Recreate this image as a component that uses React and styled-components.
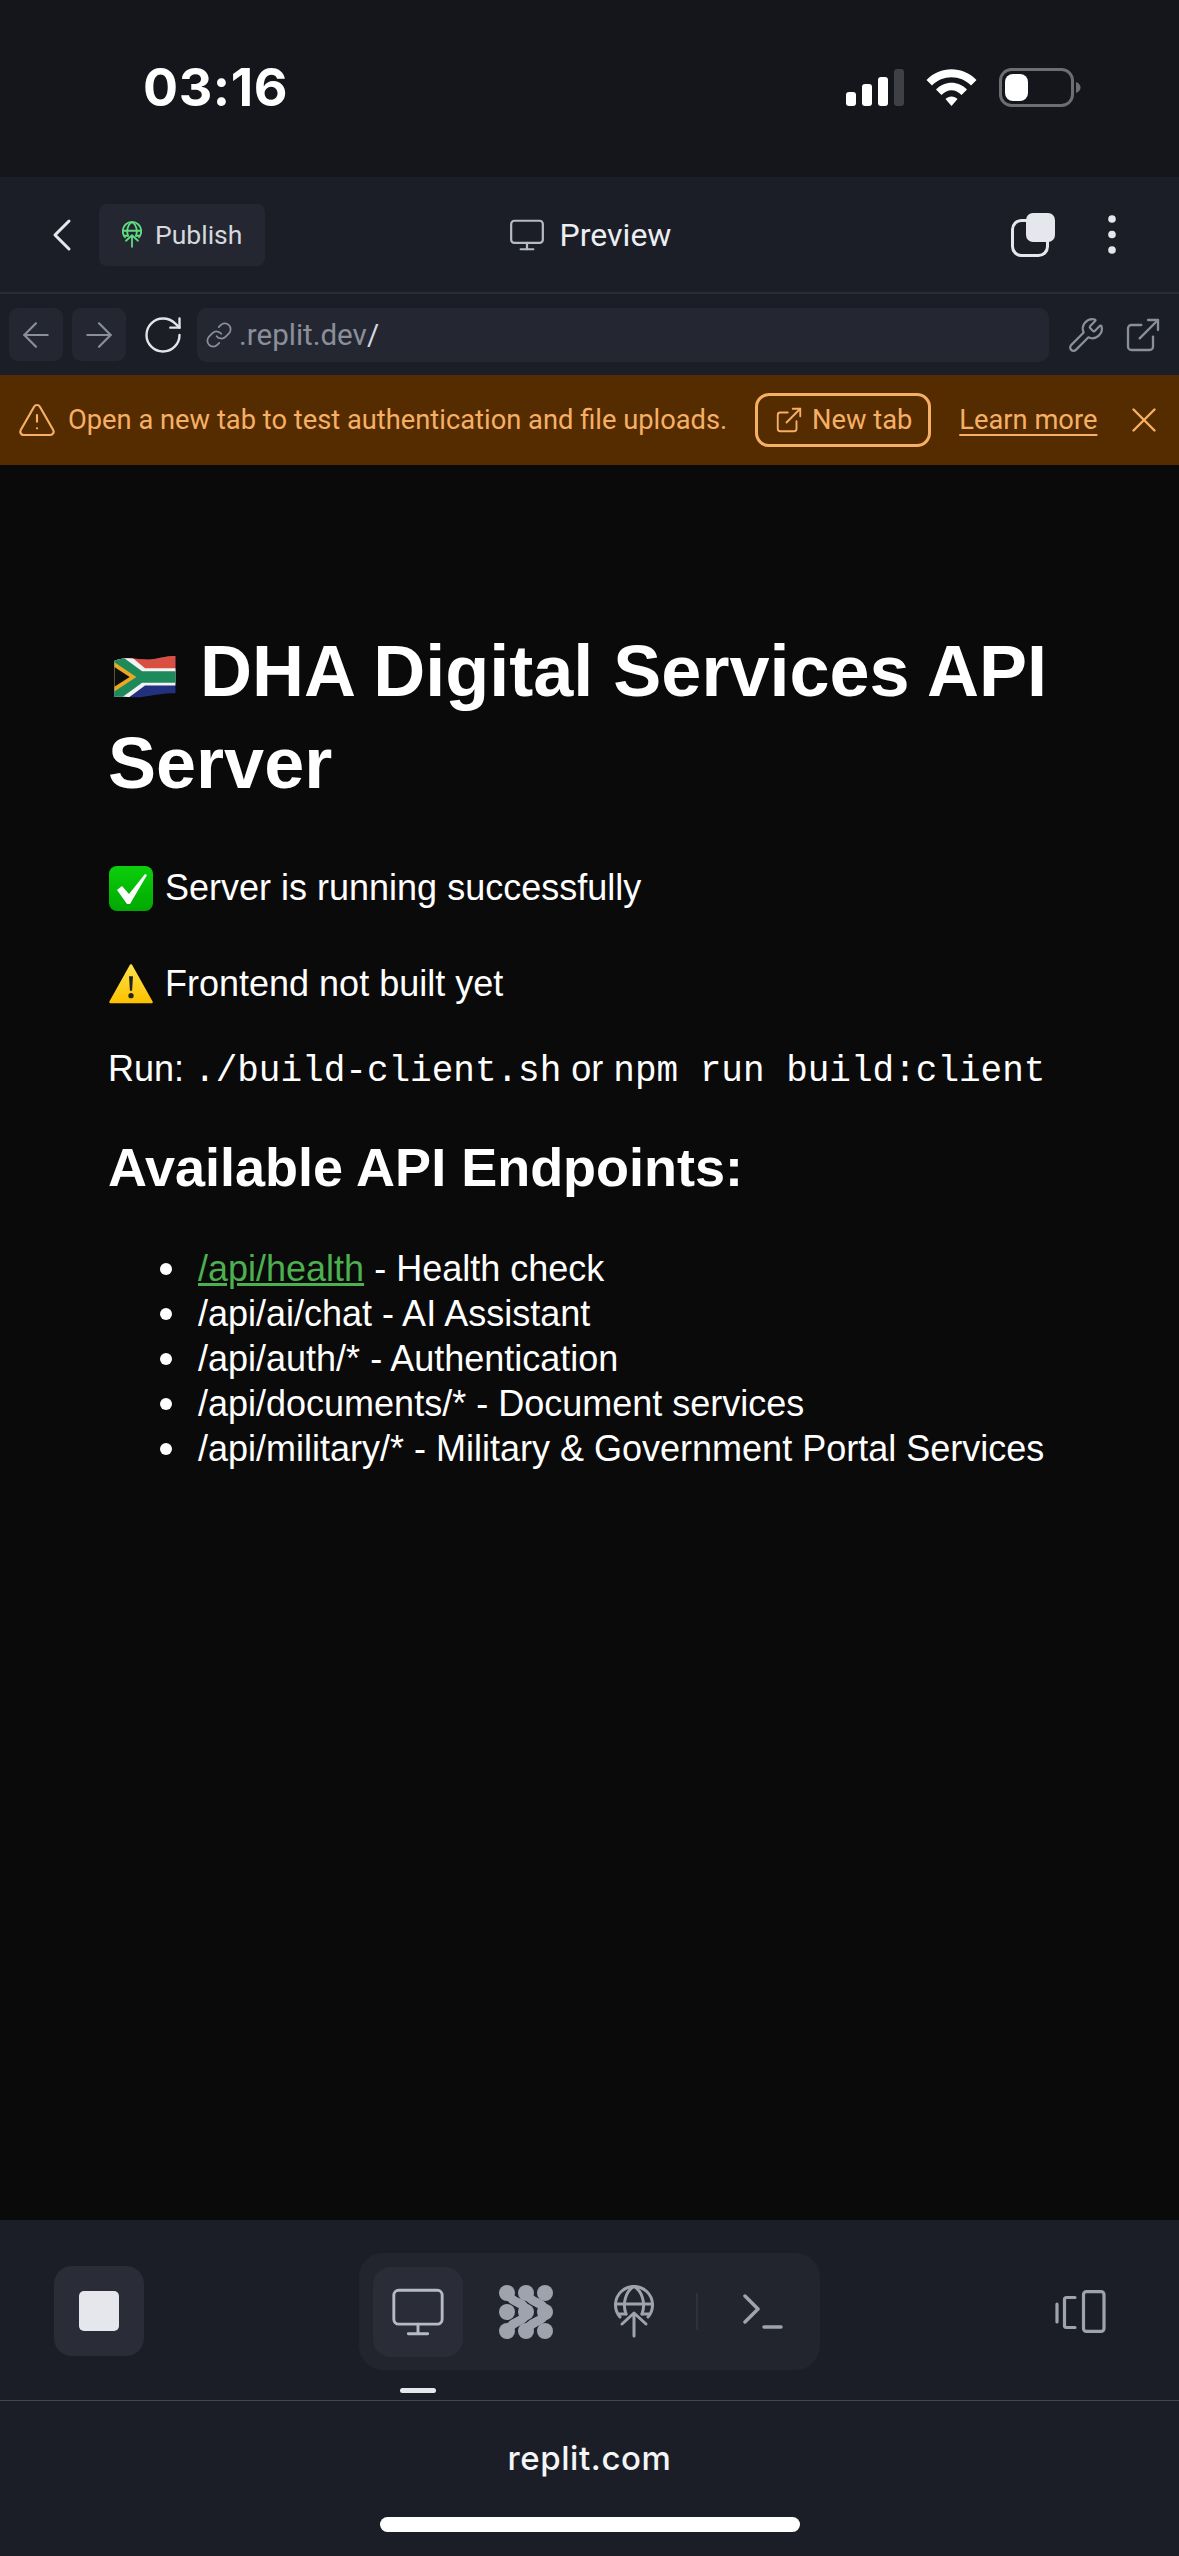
import styled, { createGlobalStyle } from "styled-components";
import { ChevronLeft, Monitor, ArrowLeft, ArrowRight, RotateCw, Link, Wrench, ExternalLink, TriangleAlert, X } from "lucide-react";

const Global = createGlobalStyle`
  html, body { margin: 0; padding: 0; background: #0a0a0a; }
  * { box-sizing: border-box; }
`;

const uiFont = `"Roboto", "Liberation Sans", sans-serif`;

const Screen = styled.div`
  width: 1179px;
  height: 2556px;
  display: flex;
  flex-direction: column;
  background: #0a0a0a;
  overflow: hidden;
  font-family: ${uiFont};
`;

const StatusBar = styled.div`
  height: 177px;
  background: #14161b;
  display: flex;
  align-items: center;
  justify-content: space-between;
  padding: 0 98px 2px 143px;
  flex-shrink: 0;
`;

const Clock = styled.div`
  font-family: "Inter", sans-serif;
  font-weight: 700;
  font-size: 52px;
  color: #fff;
  letter-spacing: 0.6px;
`;

const StatusIcons = styled.div`
  display: flex;
  align-items: center;
  gap: 22px;
`;

const Header = styled.div`
  height: 117px;
  background: #1b1e27;
  border-bottom: 2px solid #2a2d36;
  display: grid;
  grid-template-columns: 1fr auto 1fr;
  align-items: center;
  padding: 0 34px;
  flex-shrink: 0;
`;

const HeaderLeft = styled.div`
  display: flex;
  align-items: center;
`;

const PublishButton = styled.div`
  width: 166px;
  height: 62px;
  margin-left: 9px;
  padding-left: 23px;
  background: #242731;
  border-radius: 8px;
  display: flex;
  align-items: center;
  gap: 13px;
  color: #d5d8df;
  font-size: 26.5px;
`;

const HeaderTitle = styled.div`
  display: flex;
  align-items: center;
  gap: 14px;
  color: #eceef2;
  font-size: 32px;
  font-weight: 450;
`;

const HeaderActions = styled.div`
  display: flex;
  align-items: center;
  justify-content: flex-end;
  gap: 53px;
  padding-right: 29px;
`;

const UrlRow = styled.div`
  height: 81px;
  background: #1b1e27;
  display: flex;
  align-items: center;
  padding: 0 16px 0 9px;
  flex-shrink: 0;
`;

const NavButton = styled.div`
  width: 54px;
  height: 53px;
  margin-right: 9px;
  border-radius: 9px;
  background: #242731;
  display: flex;
  align-items: center;
  justify-content: center;
  color: #8b8f9a;
`;

const Reload = styled.div`
  width: 44px;
  height: 44px;
  margin: 0 12px 0 6px;
  color: #e2e4ea;
`;

const UrlField = styled.div`
  flex: 1;
  height: 54px;
  background: #242731;
  border-radius: 10px;
  display: flex;
  align-items: center;
  gap: 6px;
  padding: 0 8px;
  color: #8b8f9a;
  font-size: 29.5px;

  b {
    font-weight: 400;
    color: #d5d8df;
  }
`;

const UrlTools = styled.div`
  display: flex;
  align-items: center;
  gap: 18px;
  margin-left: 18px;
  color: #8b8f9a;
`;

const Banner = styled.div`
  height: 90px;
  background: #552b00;
  color: #f5b066;
  display: flex;
  align-items: center;
  padding: 0 14px 0 17px;
  font-size: 27.3px;
  flex-shrink: 0;
`;

const BannerText = styled.span`
  margin-left: 11px;
  white-space: nowrap;
`;

const NewTabButton = styled.div`
  height: 54px;
  width: 176px;
  margin-left: 28px;
  border: 3px solid #f5b066;
  border-radius: 14px;
  display: flex;
  align-items: center;
  justify-content: center;
  gap: 8px;
`;

const LearnMore = styled.span`
  margin-left: 28px;
  text-decoration: underline;
  text-underline-offset: 5px;
  text-decoration-thickness: 2px;
`;

const BannerClose = styled.div`
  margin-left: auto;
  display: flex;
`;

const Content = styled.div`
  flex: 1;
  background: #0a0a0a;
  color: #fff;
  font-family: "Liberation Sans", Arial, sans-serif;
  font-size: 36px;
  padding: 160px 108px 0;
`;

const Title = styled.h1`
  margin: 0 0 56px;
  font-size: 72px;
  line-height: 92px;
  font-weight: 700;
`;

const FlagSvg = styled.svg`
  margin: 0 23px 0 5px;
  vertical-align: -3px;
`;

const Line = styled.p`
  margin: 0 0 ${(p) => p.$gap || 50}px;
  line-height: 46px;
  white-space: nowrap;
  display: flex;
  align-items: center;
  gap: 12px;
  padding-left: 1px;
`;

const RunLine = styled.p`
  margin: 0;
  line-height: 46px;
  white-space: nowrap;
`;

const Code = styled.code`
  font-family: "Liberation Mono", monospace;
  font-size: 36px;
`;

const SubTitle = styled.h2`
  margin: 40px 0 47px;
  font-size: 54px;
  line-height: 64px;
  font-weight: 700;
`;

const List = styled.ul`
  margin: 0;
  padding: 0 0 0 90px;
  line-height: 45px;
  list-style: none;
`;

const Item = styled.li`
  position: relative;

  &::before {
    content: "";
    position: absolute;
    left: -38px;
    top: 17px;
    width: 12px;
    height: 12px;
    border-radius: 50%;
    background: #fff;
  }
`;

const ApiLink = styled.a`
  color: #4caf50;
  text-decoration: underline;
`;

const Toolbar = styled.div`
  height: 181px;
  background: #1b1e27;
  border-bottom: 1px solid #43454c;
  display: flex;
  align-items: flex-start;
  padding: 33px 0 0 54px;
  flex-shrink: 0;
`;

const StopButton = styled.div`
  width: 90px;
  height: 90px;
  margin-top: 13px;
  border-radius: 18px;
  background: #2a2c37;
  display: flex;
  align-items: center;
  justify-content: center;

  i {
    width: 40px;
    height: 40px;
    border-radius: 5px;
    background: #e6e7ec;
  }
`;

const TabGroup = styled.div`
  width: 461px;
  height: 117px;
  margin-left: 215px;
  padding-left: 14px;
  border-radius: 24px;
  background: #22252e;
  display: flex;
  align-items: center;
`;

const Tab = styled.div`
  width: 90px;
  height: 90px;
  margin-right: ${(p) => p.$gap || 0}px;
  border-radius: 18px;
  background: ${(p) => (p.$active ? "#2a2c37" : "transparent")};
  display: flex;
  align-items: center;
  justify-content: center;
  color: #9ea3ad;
  position: relative;
`;

const TabDivider = styled.div`
  width: 2px;
  height: 37px;
  background: #2e313a;
  margin: 0 45px 0 -2px;
`;

const ActiveMark = styled.span`
  position: absolute;
  left: 27px;
  bottom: -36px;
  width: 36px;
  height: 5px;
  border-radius: 3px;
  background: #e6e7ec;
`;

const PanelToggle = styled.div`
  margin-left: 235px;
  margin-top: 37px;
  display: flex;
`;

const AddressBar = styled.div`
  height: 155px;
  flex-shrink: 0;
  background: #1b1e27;
  display: flex;
  flex-direction: column;
  align-items: center;
`;

const Domain = styled.div`
  margin-top: 37px;
  font-family: "Inter", sans-serif;
  font-size: 33px;
  line-height: 40px;
  font-weight: 500;
  letter-spacing: 0.6px;
  color: #f4f5f7;
`;

const HomeBar = styled.div`
  width: 420px;
  height: 15px;
  margin-top: 39px;
  border-radius: 8px;
  background: #fff;
`;

const SignalIcon = () => (
  <svg width="58" height="37" viewBox="0 0 58 37" fill="#fff">
    <rect x="0" y="23" width="10" height="14" rx="3" />
    <rect x="16" y="15" width="10" height="22" rx="3" />
    <rect x="32" y="8" width="10" height="29" rx="3" />
    <rect x="48" y="0" width="10" height="37" rx="3" fill="#3e4045" />
  </svg>
);

const WifiIcon = () => (
  <svg width="51" height="37" viewBox="0 0 51 37" fill="#fff">
    <path d="M0.5 11 C14 -3.5 37 -3.5 50.5 11 L45 16.5 C34.5 5.5 16.5 5.5 6 16.5 Z" />
    <path d="M10 20.5 C18.5 11.5 32.5 11.5 41 20.5 L35.5 26 C29.5 19.5 21.5 19.5 15.5 26 Z" />
    <path d="M19.5 30 C22.5 26.5 28.5 26.5 31.5 30 L25.5 37 Z" />
  </svg>
);

const BatteryIcon = () => (
  <svg width="82" height="39" viewBox="0 0 82 39">
    <rect x="1.5" y="1.5" width="72" height="36" rx="11" fill="none" stroke="#6d6e72" strokeWidth="3" />
    <rect x="6" y="6" width="23" height="27" rx="8" fill="#fff" />
    <path d="M77 14 C80 15 81.5 17 81.5 19.5 C81.5 22 80 24 77 25 Z" fill="#6d6e72" />
  </svg>
);

// globe with an up arrow, used for Publish and for the deploy tab
const PublishGlobe = ({ width, height, color, weight = 3 }) => (
  <svg width={width} height={height} viewBox="0 0 40 53" fill="none" stroke={color} strokeWidth={weight} strokeLinecap="round" strokeLinejoin="round">
    <path d="M6 32 A18.5 18.5 0 1 1 34 32" />
    <path d="M1.5 19 H38.5 M5 29 H12 M28 29 H35" />
    <path d="M12 29 C8 18 12 6 20 1.5 C28 6 32 18 28 29" />
    <path d="M20 51 V28 M8 39 L20 28 L32 39" />
  </svg>
);

const CopyIcon = () => (
  <svg width="44" height="44" viewBox="0 0 44 44">
    <rect x="1.5" y="7.5" width="35" height="35" rx="9" fill="none" stroke="#e6e7ec" strokeWidth="3" />
    <rect x="15" y="0" width="29" height="29" rx="7" fill="#e6e7ec" />
  </svg>
);

const DotsIcon = () => (
  <svg width="8" height="39" viewBox="0 0 8 39" fill="#e6e7ec">
    <circle cx="4" cy="4" r="3.8" />
    <circle cx="4" cy="19.5" r="3.8" />
    <circle cx="4" cy="35" r="3.8" />
  </svg>
);

const CheckEmoji = () => (
  <svg width="44" height="45" viewBox="0 0 44 45">
    <defs>
      <linearGradient id="chk" x1="0" y1="0" x2="0" y2="1">
        <stop offset="0" stopColor="#0ccf0c" />
        <stop offset="1" stopColor="#00a800" />
      </linearGradient>
    </defs>
    <rect width="44" height="45" rx="8" fill="url(#chk)" />
    <path d="M8 24 L13 20 L20 28 L36 8 L38 9 L21 38 L18 38 Z" fill="#fff" />
  </svg>
);

const WarnEmoji = () => (
  <svg width="44" height="42" viewBox="0 0 45 42">
    <defs>
      <linearGradient id="wrn" x1="0" y1="0" x2="0" y2="1">
        <stop offset="0" stopColor="#ffe14a" />
        <stop offset="1" stopColor="#fcc200" />
      </linearGradient>
    </defs>
    <path d="M22.5 2 L43.5 39.5 H1.5 Z" fill="url(#wrn)" stroke="url(#wrn)" strokeWidth="2.5" strokeLinejoin="round" />
    <path d="M20.5 13 H24.5 L23.6 28 H21.4 Z" fill="#222" />
    <circle cx="22.5" cy="33" r="2.7" fill="#222" />
  </svg>
);

const FlagEmoji = () => (
  <FlagSvg width="64" height="46" viewBox="0 0 66 48">
    <defs>
      <clipPath id="wave">
        <path d="M1 8 C18 2 30 9 44 6 C52 4 60 3 65 3 V42 C52 42 42 44 30 46 C18 47 8 44 1 46 Z" />
      </clipPath>
    </defs>
    <g clipPath="url(#wave)">
      <rect width="66" height="48" fill="#23307f" />
      <rect width="66" height="20" fill="#d94f40" />
      <path d="M0 0 H14 L33 16 H66 V34 H33 L14 48 H0 Z" fill="#f2f2f2" />
      <path d="M0 3 H8 L30 19 H66 V31 H30 L8 47 H0 Z" fill="#1e8a5c" />
      <path d="M0 9 L24 25 L0 41 Z" fill="#eaa920" />
      <path d="M0 14 L17 25 L0 36 Z" fill="#0d0d0d" />
    </g>
  </FlagSvg>
);

const CirclesIcon = () => (
  <svg width="54" height="54" viewBox="0 0 54 54" fill="#9ea3ad">
    {[8, 27, 46].map((cy) =>
      [8, 27, 46].map((cx) => <circle key={`${cx}-${cy}`} cx={cx} cy={cy} r="8" />)
    )}
    <g fill="none" stroke="#9ea3ad" strokeWidth="9">
      <path d="M8 8 C13 20 27 16 27 27 C27 38 13 34 8 46" />
      <path d="M27 8 C32 20 46 16 46 27 C46 38 32 34 27 46" />
    </g>
  </svg>
);

const TerminalIcon = () => (
  <svg width="40" height="36" viewBox="0 0 40 36" fill="none" stroke="#9ea3ad" strokeWidth="3.5" strokeLinecap="round" strokeLinejoin="round">
    <path d="M2 2 L15 15 L2 28" />
    <path d="M21 33 H38" />
  </svg>
);

const PanelIcon = () => (
  <svg width="51" height="43" viewBox="0 0 51 43" fill="none" stroke="#9ea3ad" strokeWidth="3.2" strokeLinecap="round" strokeLinejoin="round">
    <path d="M2 14 V32" />
    <path d="M20 7.5 H11.5 Q9.5 7.5 9.5 9.5 V35.5 Q9.5 37.5 11.5 37.5 H20" />
    <rect x="28.5" y="1.6" width="20.5" height="39.8" rx="3" />
  </svg>
);

export default function App() {
  return (
    <Screen>
      <Global />
      <StatusBar>
        <Clock>03:16</Clock>
        <StatusIcons>
          <SignalIcon />
          <WifiIcon />
          <BatteryIcon />
        </StatusIcons>
      </StatusBar>
      <Header>
        <HeaderLeft>
          <ChevronLeft size={56} color="#e6e7ec" strokeWidth={1.3} />
          <PublishButton>
            <PublishGlobe width={20} height={27} color="#5fdc7f" weight={3.6} />
            Publish
          </PublishButton>
        </HeaderLeft>
        <HeaderTitle>
          <Monitor size={38} color="#b6bac3" strokeWidth={1.4} />
          Preview
        </HeaderTitle>
        <HeaderActions>
          <CopyIcon />
          <DotsIcon />
        </HeaderActions>
      </Header>
      <UrlRow>
        <NavButton>
          <ArrowLeft size={40} strokeWidth={1.3} />
        </NavButton>
        <NavButton>
          <ArrowRight size={40} strokeWidth={1.3} />
        </NavButton>
        <Reload>
          <RotateCw size={44} strokeWidth={1.3} />
        </Reload>
        <UrlField>
          <Link size={28} strokeWidth={1.5} />
          <span>
            .replit.dev<b>/</b>
          </span>
        </UrlField>
        <UrlTools>
          <Wrench size={38} strokeWidth={1.4} />
          <ExternalLink size={40} strokeWidth={1.4} />
        </UrlTools>
      </UrlRow>
      <Banner>
        <TriangleAlert size={40} strokeWidth={1.3} />
        <BannerText>Open a new tab to test authentication and file uploads.</BannerText>
        <NewTabButton>
          <ExternalLink size={30} strokeWidth={1.5} />
          New tab
        </NewTabButton>
        <LearnMore>Learn more</LearnMore>
        <BannerClose>
          <X size={42} strokeWidth={1.4} />
        </BannerClose>
      </Banner>
      <Content>
        <Title>
          <FlagEmoji />
          DHA Digital Services API Server
        </Title>
        <Line>
          <CheckEmoji />
          Server is running successfully
        </Line>
        <Line $gap={39}>
          <WarnEmoji />
          Frontend not built yet
        </Line>
        <RunLine>
          Run: <Code>./build-client.sh</Code> or <Code>npm run build:client</Code>
        </RunLine>
        <SubTitle>Available API Endpoints:</SubTitle>
        <List>
          <Item>
            <ApiLink>/api/health</ApiLink> - Health check
          </Item>
          <Item>/api/ai/chat - AI Assistant</Item>
          <Item>/api/auth/* - Authentication</Item>
          <Item>/api/documents/* - Document services</Item>
          <Item>/api/military/* - Military &amp; Government Portal Services</Item>
        </List>
      </Content>
      <Toolbar>
        <StopButton>
          <i />
        </StopButton>
        <TabGroup>
          <Tab $active $gap={18}>
            <Monitor size={58} strokeWidth={1.2} color="#b6bac3" />
            <ActiveMark />
          </Tab>
          <Tab $gap={18}>
            <CirclesIcon />
          </Tab>
          <Tab $gap={19}>
            <PublishGlobe width={40} height={53} color="#9ea3ad" />
          </Tab>
          <TabDivider />
          <TerminalIcon />
        </TabGroup>
        <PanelToggle>
          <PanelIcon />
        </PanelToggle>
      </Toolbar>
      <AddressBar>
        <Domain>replit.com</Domain>
        <HomeBar />
      </AddressBar>
    </Screen>
  );
}
